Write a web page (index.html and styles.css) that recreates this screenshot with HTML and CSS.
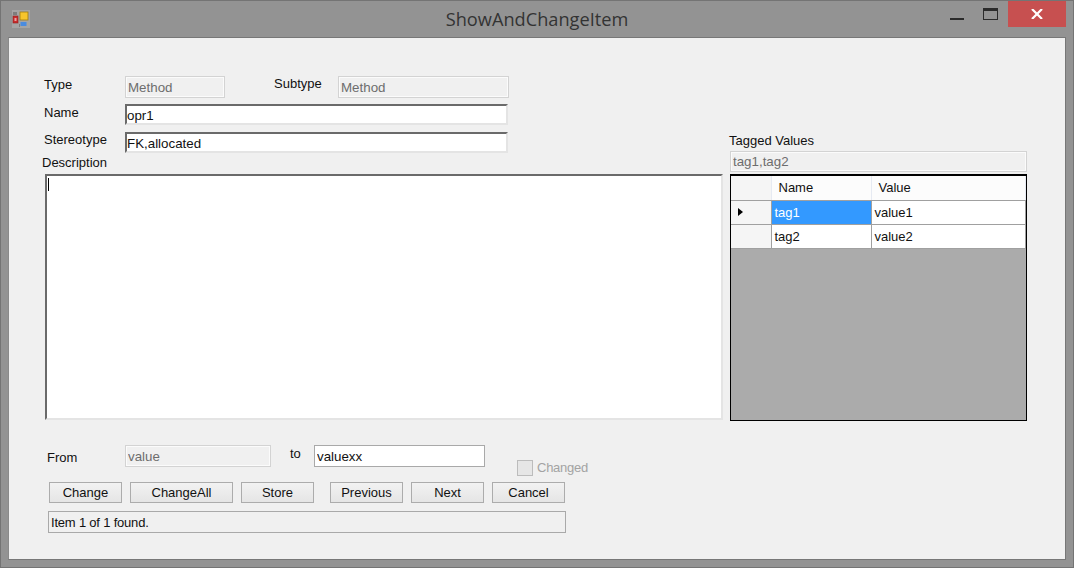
FILE: index.html

```html
<!DOCTYPE html>
<html lang="en">
<head>
  <meta charset="UTF-8" />
  <title>ShowAndChangeItem</title>
  <link rel="stylesheet" href="styles.css">
</head>
<body>
  <div class="window">
    <div class="titlebar">
      <svg class="app-icon" width="18" height="18" viewBox="0 0 18 18">
        <rect width="18" height="18" fill="#a5a5a5" />
        <rect x="1" y="2" width="4" height="3" fill="#7d7d7d" />
        <rect x="7" y="14" width="1" height="3" fill="#7d7d7d" />
        <rect x="1" y="6" width="5" height="7" fill="#c92c2c" stroke="#8e2020" stroke-width="0.6" />
        <rect x="2.5" y="8" width="2" height="3" fill="#e8a0a0" />
        <rect x="8" y="2" width="8" height="8" fill="#f7c52c" stroke="#a07c10" stroke-width="0.8" />
        <rect x="8.5" y="12" width="6" height="4" fill="#4a8ce0" />
      </svg>
      <div class="title">ShowAndChangeItem</div>
      <div class="controls">
        <span class="btn-min"></span>
        <span class="btn-max"></span>
        <span class="btn-close">
          <svg width="12" height="10" viewBox="0 0 12 10">
            <path d="M1 0 L11 10 M11 0 L1 10" stroke="#fff" stroke-width="2.2" fill="none" />
          </svg>
        </span>
      </div>
    </div>

    <div class="client">
      <div class="main">
        <div class="left">
          <div class="row row-type">
            <label class="lbl lbl-type">Type</label>
            <input class="field off w-type" type="text" value="Method" disabled />
            <label class="lbl lbl-subtype">Subtype</label>
            <input class="field off w-subtype" type="text" value="Method" disabled />
          </div>
          <div class="row row-name">
            <label class="lbl lbl-name">Name</label>
            <input class="field sunken w-name" type="text" value="opr1" />
          </div>
          <div class="row row-stereo">
            <label class="lbl lbl-stereo">Stereotype</label>
            <input class="field sunken w-name" type="text" value="FK,allocated" />
          </div>
          <div class="lbl-desc">Description</div>
          <div class="description"><span class="caret"></span></div>
        </div>

        <div class="right">
          <div class="lbl-tagged">Tagged Values</div>
          <input class="field off w-tags" type="text" value="tag1,tag2" disabled />
          <div class="grid">
            <table>
              <tr class="head">
                <th class="c-hdr"></th>
                <th class="c-name">Name</th>
                <th class="c-value">Value</th>
              </tr>
              <tr>
                <td class="c-hdr"><span class="arrow"></span></td>
                <td class="selected">tag1</td>
                <td>value1</td>
              </tr>
              <tr>
                <td class="c-hdr"></td>
                <td>tag2</td>
                <td>value2</td>
              </tr>
            </table>
          </div>
        </div>
      </div>

      <div class="row-from">
        <label class="lbl lbl-from">From</label>
        <input class="field off w-from" type="text" value="value" disabled />
        <label class="lbl lbl-to">to</label>
        <input class="field plain w-from2" type="text" value="valuexx" />
        <div class="changed">
          <span class="check"></span>
          <span class="changed-text">Changed</span>
        </div>
      </div>

      <div class="buttons">
        <button class="w-std">Change</button>
        <button class="w-all">ChangeAll</button>
        <button class="w-std">Store</button>
        <button class="w-std gap-prev">Previous</button>
        <button class="w-std">Next</button>
        <button class="w-std">Cancel</button>
      </div>

      <div class="status">Item 1 of 1 found.</div>
    </div>
  </div>
</body>
</html>
```

FILE: styles.css

```css
html, body {
  margin: 0;
  padding: 0;
}
body {
  font-family: "Liberation Sans", Arial, sans-serif;
  font-size: 13px;
  color: #111;
}
.window {
  box-sizing: border-box;
  width: 1074px;
  height: 568px;
  border: 1px solid #747474;
  background: #939393;
  padding: 0 7px 7px 7px;
  display: flex;
  flex-direction: column;
}

/* title bar */
.titlebar {
  height: 36px;
  flex: none;
  display: grid;
  grid-template-columns: 1fr auto 1fr;
}
.app-icon {
  margin: 9px 0 0 4px;
}
.title {
  font-family: "Open Sans", sans-serif;
  font-size: 18.2px;
  line-height: 37px;
  color: #333;
}
.controls {
  display: flex;
  justify-content: flex-end;
  align-items: flex-start;
}
.btn-min {
  width: 14px;
  height: 2px;
  margin-top: 17px;
  background: #2b2b2b;
}
.btn-max {
  box-sizing: border-box;
  width: 15px;
  height: 12px;
  margin: 7px 10px 0 19px;
  border: 1px solid #2b2b2b;
  border-top-width: 3px;
}
.btn-close {
  width: 58px;
  height: 26px;
  background: #c75050;
  display: flex;
  align-items: center;
  justify-content: center;
}

/* client area */
.client {
  flex: 1;
  min-height: 0;
  background: #f0f0f0;
  border: 1px solid #777;
  border-left-color: #8a8a8a;
  padding: 0 0 0 33px;
}
.main {
  display: flex;
  gap: 7px;
}
.left {
  width: 681px;
  flex: none;
}
.row {
  display: flex;
  align-items: flex-start;
}
.row-type {
  margin-top: 38px;
}
.row-name {
  margin-top: 6px;
}
.row-stereo {
  margin-top: 7px;
}
.lbl {
  line-height: 15px;
}
.lbl-type {
  width: 81px;
  margin-left: 2px;
  margin-top: 1px;
}
.lbl-subtype {
  width: 64px;
  margin-left: 49px;
}
.lbl-name {
  width: 81px;
  margin-left: 2px;
  margin-top: 1px;
}
.lbl-stereo {
  width: 81px;
  margin-left: 2px;
}
.lbl-desc {
  line-height: 15px;
  margin-top: 2px;
}
.description {
  box-sizing: border-box;
  width: 678px;
  height: 246px;
  margin: 4px 0 0 3px;
  background: #fff;
  border: 2px solid #e4e4e4;
  border-top-color: #6a6a6a;
  border-left-color: #6a6a6a;
  padding: 2px 0 0 1px;
}
.caret {
  display: block;
  width: 1px;
  height: 13px;
  background: #000;
}
.field {
  box-sizing: border-box;
  font-family: inherit;
  font-size: 13.33px;
  height: 21px;
  padding: 0 0 0 1px;
  margin: 0;
  color: #111;
  outline: none;
  border-radius: 0;
}
.off {
  height: 22px;
  background: #f0f0f0;
  color: #6d6d6d;
  border: 1px solid #d3d3d3;
  box-shadow: inset 0 0 0 1px #fbfbfb;
  padding-left: 2px;
}
.sunken {
  background: #fff;
  border: 2px solid #e4e4e4;
  border-top-color: #6a6a6a;
  border-left-color: #6a6a6a;
  padding: 2px 0 0 0;
}
.plain {
  height: 22px;
  background: #fff;
  border: 1px solid #a9a9a9;
  padding-left: 2px;
}
.w-type {
  width: 100px;
}
.w-subtype {
  width: 171px;
}
.w-name {
  width: 383px;
}
.w-tags {
  width: 297px;
  display: block;
  height: 21px;
}
.w-from {
  width: 146px;
}
.w-from2 {
  width: 171px;
}

/* tagged values */
.right {
  width: 298px;
  flex: none;
}
.lbl-tagged {
  line-height: 15px;
  margin: 95px 0 3px -1px;
}
.grid {
  box-sizing: border-box;
  width: 297px;
  height: 247px;
  margin-top: 2px;
  background: #ababab;
  border: 1px solid #000;
  border-top-width: 2px;
}
.grid table {
  border-collapse: collapse;
  table-layout: fixed;
  width: 295px;
  font-size: 13px;
}
.grid th, .grid td {
  box-sizing: border-box;
  height: 24px;
  padding: 0 0 0 3px;
  background: #fff;
  border-right: 1px solid #a0a0a0;
  border-bottom: 1px solid #a0a0a0;
  text-align: left;
  font-weight: normal;
}
.grid .head th {
  background: #fcfcfc;
  padding-left: 7px;
  border-right-color: #e6eaf2;
}
.grid th.c-hdr, .grid td.c-hdr {
  width: 40px;
  background: #f5f5f5;
  padding: 0 0 0 7px;
}
.grid .c-name {
  width: 100px;
}
.grid td.selected {
  background: #3399ff;
  color: #fff;
}
.arrow {
  display: block;
  width: 0;
  height: 0;
  border-left: 5px solid #000;
  border-top: 4px solid transparent;
  border-bottom: 4px solid transparent;
}

/* from / to row */
.row-from {
  display: flex;
  align-items: flex-start;
  height: 37px;
  margin-top: 24px;
}
.lbl-from {
  width: 78px;
  margin: 5px 0 0 5px;
}
.lbl-to {
  width: 24px;
  margin: 1px 0 0 19px;
}
.changed {
  display: flex;
  align-items: flex-start;
  gap: 4px;
  margin: 15px 0 0 32px;
  color: #a3a3a3;
}
.changed-text {
  line-height: 15px;
  letter-spacing: -0.25px;
}
.check {
  box-sizing: border-box;
  width: 16px;
  height: 16px;
  background: #e6e6e6;
  border: 1px solid #bcbcbc;
}

/* buttons */
.buttons {
  display: flex;
  gap: 8px;
  margin-left: 7px;
}
.buttons button {
  box-sizing: border-box;
  height: 21px;
  padding: 0;
  font-family: inherit;
  font-size: 13px;
  color: #111;
  background: linear-gradient(#f2f2f2, #e5e5e5);
  border: 1px solid #acacac;
  border-radius: 0;
}
.w-std {
  width: 73px;
}
.w-all {
  width: 103px;
}
.buttons .gap-prev {
  margin-left: 8px;
}
.status {
  box-sizing: border-box;
  width: 518px;
  height: 22px;
  margin: 8px 0 0 6px;
  padding-left: 2px;
  line-height: 21px;
  letter-spacing: -0.2px;
  border: 1px solid #a9a9a9;
}
```
